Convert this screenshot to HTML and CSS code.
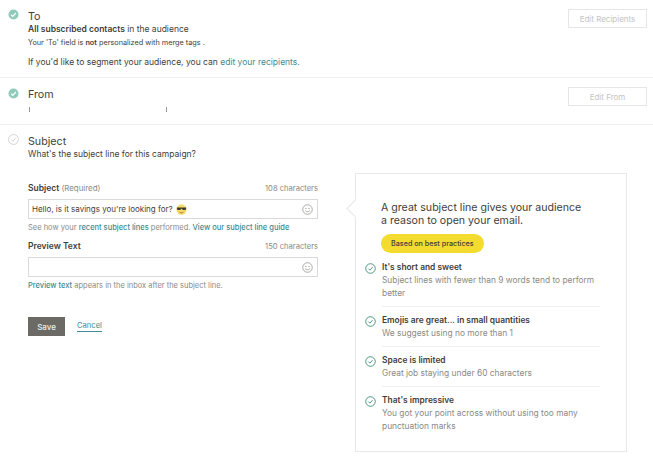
FILE: index.html
```html
<!DOCTYPE html>
<html lang="en">
<head>
	<meta charset="UTF-8">
	<meta name="viewport" content="width=device-width, initial-scale=1.0">
	<title>Campaign Checklist</title>

	<link rel="stylesheet" href="styles.css">
</head>
<body>
	<!-- to -->
	<section class="row row-to">
		<svg class="status" viewBox="0 0 12 12"><circle cx="6" cy="6" r="5.5" fill="#8fcabb"/><path d="M3.4 6.2l1.8 1.8 3.4-3.6" fill="none" stroke="#fff" stroke-width="1.4"/></svg>
		<div class="row-body">
			<h2>To</h2>
			<p class="main"><b>All subscribed contacts</b> in the audience</p>
			<p class="small">Your 'To' field is <b>not</b> personalized with merge tags .</p>
			<p class="segment">If you'd like to segment your audience, you can <a href="#">edit your recipients.</a></p>
		</div>
		<button class="edit-btn">Edit Recipients</button>
	</section>

	<!-- from -->
	<section class="row row-from">
		<svg class="status" viewBox="0 0 12 12"><circle cx="6" cy="6" r="5.5" fill="#8fcabb"/><path d="M3.4 6.2l1.8 1.8 3.4-3.6" fill="none" stroke="#fff" stroke-width="1.4"/></svg>
		<div class="row-body">
			<h2>From</h2>
			<div class="redacted"><i></i><i></i></div>
		</div>
		<button class="edit-btn">Edit From</button>
	</section>

	<!-- subject -->
	<section class="row row-subject">
		<svg class="status" viewBox="0 0 12 12"><circle cx="6" cy="6" r="5.4" fill="none" stroke="#cfcfcd" stroke-width="1"/><path d="M3.6 6.2l1.7 1.7 3.2-3.4" fill="none" stroke="#cfcfcd" stroke-width="1"/></svg>
		<div class="row-body">
			<h2>Subject</h2>
			<p class="main">What's the subject line for this campaign?</p>

			<div class="subject-layout">
				<form class="subject-form">
					<div class="field-head">
						<label>Subject <span>(Required)</span></label>
						<span class="count">108 characters</span>
					</div>
					<div class="input">
						<span>Hello, is it savings you're looking for?</span>
						<svg class="emoji" viewBox="0 0 12 12"><circle cx="6" cy="6" r="5.6" fill="#f7d96b"/><path d="M1 3.9h10v1.2l-.7 1.4H7.4L6.4 5.1h-.8L4.6 6.5H1.7L1 5.1z" fill="#3b3a34"/><path d="M4 9c1.3.8 2.7.8 4 0" fill="none" stroke="#7a5c2e" stroke-width=".8"/></svg>
						<svg class="smiley" viewBox="0 0 12 12"><circle cx="6" cy="6" r="5.2" fill="none" stroke="#8d8d8a" stroke-width=".8"/><circle cx="4.3" cy="4.8" r=".6" fill="#8d8d8a"/><circle cx="7.7" cy="4.8" r=".6" fill="#8d8d8a"/><path d="M3.5 7.3c1.4 1.5 3.6 1.5 5 0" fill="none" stroke="#8d8d8a" stroke-width=".8"/></svg>
					</div>
					<p class="hint">See how your <a href="#">recent subject lines</a> performed. <a href="#">View our subject line guide</a></p>

					<div class="field-head">
						<label>Preview Text</label>
						<span class="count">150 characters</span>
					</div>
					<div class="input">
						<svg class="smiley" viewBox="0 0 12 12"><circle cx="6" cy="6" r="5.2" fill="none" stroke="#8d8d8a" stroke-width=".8"/><circle cx="4.3" cy="4.8" r=".6" fill="#8d8d8a"/><circle cx="7.7" cy="4.8" r=".6" fill="#8d8d8a"/><path d="M3.5 7.3c1.4 1.5 3.6 1.5 5 0" fill="none" stroke="#8d8d8a" stroke-width=".8"/></svg>
					</div>
					<p class="hint"><a href="#">Preview text</a> appears in the inbox after the subject line.</p>

					<div class="actions">
						<button class="save-btn" type="button">Save</button>
						<a class="cancel" href="#">Cancel</a>
					</div>
				</form>

				<!-- tips -->
				<aside class="tips">
					<h3>A great subject line gives your audience a reason to open your email.</h3>
					<span class="pill">Based on best practices</span>
					<ul>
						<li>
							<svg viewBox="0 0 12 12"><circle cx="6" cy="6" r="5.2" fill="none" stroke="#3f8f75" stroke-width="1"/><path d="M3.7 6.2l1.6 1.6 3-3.2" fill="none" stroke="#3f8f75" stroke-width="1"/></svg>
							<div><b>It's short and sweet</b><p>Subject lines with fewer than 9 words tend to perform better</p></div>
						</li>
						<li>
							<svg viewBox="0 0 12 12"><circle cx="6" cy="6" r="5.2" fill="none" stroke="#3f8f75" stroke-width="1"/><path d="M3.7 6.2l1.6 1.6 3-3.2" fill="none" stroke="#3f8f75" stroke-width="1"/></svg>
							<div><b>Emojis are great... in small quantities</b><p>We suggest using no more than 1</p></div>
						</li>
						<li>
							<svg viewBox="0 0 12 12"><circle cx="6" cy="6" r="5.2" fill="none" stroke="#3f8f75" stroke-width="1"/><path d="M3.7 6.2l1.6 1.6 3-3.2" fill="none" stroke="#3f8f75" stroke-width="1"/></svg>
							<div><b>Space is limited</b><p>Great job staying under 60 characters</p></div>
						</li>
						<li>
							<svg viewBox="0 0 12 12"><circle cx="6" cy="6" r="5.2" fill="none" stroke="#3f8f75" stroke-width="1"/><path d="M3.7 6.2l1.6 1.6 3-3.2" fill="none" stroke="#3f8f75" stroke-width="1"/></svg>
							<div><b>That's impressive</b><p>You got your point across without using too many punctuation marks</p></div>
						</li>
					</ul>
				</aside>
			</div>
		</div>
	</section>
</body>
</html>
```

FILE: styles.css
```css
*,
*::before,
*::after {
	margin: 0;
	padding: 0;
	box-sizing: border-box;
}

:root {
	--text: #3f3e3a;
	--text-muted: #8a8a86;
	--link: #3f8a93;
	--line: #efefed;
}

html, body {
	width: 100%;
	height: 100%;
	overflow: hidden;
}

body {
	background: #fff;
	color: var(--text);
	font-family: "Inter", "Liberation Sans", sans-serif;
	font-size: 8.5px;
	line-height: 13px;
}

a {
	color: var(--link);
	text-decoration: none;
}

b {
	font-weight: 600;
}

/**
* Checklist rows
*/
.row {
	display: flex;
	align-items: flex-start;
	padding-left: 8px;
	padding-right: 6px;
	padding-top: 10px;
	border-bottom: 1px solid var(--line);
}

.row-to {
	height: 78px;
}

.row-from {
	height: 47px;
}

.row-subject {
	border-bottom: 0;
}

.status {
	flex: none;
	width: 11px;
	height: 11px;
	margin-right: 9px;
	margin-top: -1px;
}

.row-from .status {
	margin-top: 0;
}

.row-body {
	flex: 1;
	min-width: 0;
}

h2 {
	font-size: 10.7px;
	font-weight: 400;
	line-height: 14px;
}

.main {
	margin-top: -1px;
}

.small {
	font-size: 7.3px;
}

.segment {
	margin-top: 7px;
}

.edit-btn {
	flex: none;
	width: 79px;
	height: 19px;
	margin-top: -1px;
	border: 1px solid #e6e6e4;
	background: #fff;
	color: #c4c4c2;
	font-family: inherit;
	font-size: 8px;
}

.redacted {
	display: flex;
	justify-content: space-between;
	width: 138px;
	margin-top: 5px;
	margin-left: 1px;
}

.redacted i {
	width: 1px;
	height: 5px;
	background: #9a9a94;
}

/**
* Subject form
*/
.subject-layout {
	display: flex;
	align-items: flex-start;
	gap: 37px;
	margin-top: 12px;
}

.subject-form {
	flex: none;
	width: 290px;
	padding-top: 9px;
}

.field-head {
	display: flex;
	justify-content: space-between;
	align-items: baseline;
}

.field-head label {
	font-size: 8.5px;
	font-weight: 600;
}

.field-head label span {
	color: var(--text-muted);
	font-size: 7.9px;
	font-weight: 400;
}

.count {
	color: var(--text-muted);
	font-size: 7.6px;
}

.input {
	display: flex;
	align-items: center;
	gap: 3px;
	height: 20px;
	margin-top: 4px;
	padding: 0 4px 0 3px;
	border: 1px solid #d9d9d7;
	font-size: 8px;
}

.emoji {
	width: 11px;
	height: 11px;
}

.smiley {
	width: 11px;
	height: 11px;
	margin-left: auto;
}

.hint {
	margin-top: 2px;
	margin-bottom: 6px;
	color: var(--text-muted);
	font-size: 7.5px;
}

.hint a {
	font-weight: 500;
}

.actions {
	display: flex;
	align-items: center;
	gap: 12px;
	margin-top: 25px;
}

.save-btn {
	width: 37px;
	height: 19px;
	border: 0;
	background: #6b6a64;
	color: #f0f0ee;
	font-family: inherit;
	font-size: 8px;
	font-weight: 500;
}

.cancel {
	font-size: 7.6px;
	border-bottom: 1px solid var(--link);
	line-height: 10px;
}

/**
* Tips panel
*/
.tips {
	position: relative;
	flex: none;
	width: 272px;
	height: 279px;
	padding: 27px 26px 0 25px;
	border: 1px solid #e8e8e6;
	background: #fff;
}

.tips::before {
	content: "";
	position: absolute;
	left: -7px;
	top: 28px;
	width: 13px;
	height: 13px;
	background: #fff;
	border-left: 1px solid #e8e8e6;
	border-bottom: 1px solid #e8e8e6;
	transform: rotate(45deg);
}

.tips h3 {
	position: relative;
	width: 205px;
	font-size: 10.6px;
	font-weight: 400;
	line-height: 13px;
}

.pill {
	display: block;
	width: fit-content;
	height: 19px;
	margin-top: 7px;
	padding: 0 10px;
	border-radius: 10px;
	background: #f3dc2f;
	font-size: 7.2px;
	font-weight: 500;
	line-height: 19px;
}

.tips ul {
	list-style: none;
	margin-left: -16px;
	margin-top: 8px;
}

.tips li {
	display: flex;
	gap: 6px;
	margin-bottom: 7px;
}

.tips li svg {
	flex: none;
	width: 11px;
	height: 11px;
	margin-top: 2px;
}

.tips li div {
	flex: 1;
	padding-bottom: 6px;
	border-bottom: 1px solid var(--line);
}

.tips li:last-child div {
	border-bottom: 0;
}

.tips li b {
	font-size: 8.4px;
}

.tips li p {
	color: var(--text-muted);
	font-size: 8.4px;
}
```
